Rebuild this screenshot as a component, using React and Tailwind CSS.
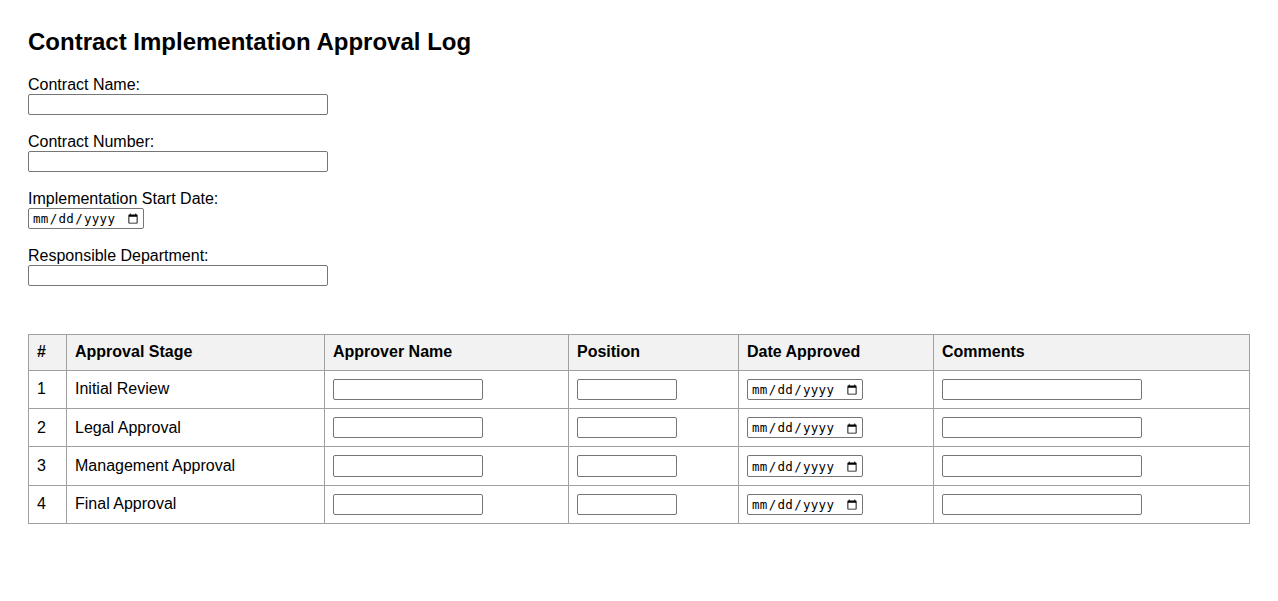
import React from "react";

const rows = ["Initial Review", "Legal Approval", "Management Approval", "Final Approval"];

const textInput =
  "block h-[21.33px] border border-[#767676] rounded-[2px] px-[2px] py-[1px] bg-white text-[13.33px] font-['Liberation_Sans',Arial,sans-serif]";
const dateInput =
  "block h-[21.33px] w-[116px] border border-[#767676] rounded-[2px] pl-[3px] pr-[2px] pt-[2px] pb-0 bg-white text-[12.5px] tracking-[0.3px] font-['DejaVu_Sans_Mono','Liberation_Mono',monospace]";

function Field({ label, type = "text" }) {
  return (
    <div className="mb-[17.3px]">
      <label className="block text-[16px] leading-[18.4px]">{label}</label>
      {type === "date" ? (
        <input type="date" className={dateInput} />
      ) : (
        <input type="text" className={textInput + " w-[300px]"} />
      )}
    </div>
  );
}

export default function App() {
  return (
    <div className="min-h-screen bg-white text-black font-['Liberation_Sans',Arial,sans-serif] px-[28px] pt-[28px] pb-[28px]">
      <h2 className="text-[24px] font-bold leading-[27.6px] mb-[20px]">
        Contract Implementation Approval Log
      </h2>
      <Field label="Contract Name:" />
      <Field label="Contract Number:" />
      <Field label="Implementation Start Date:" type="date" />
      <Field label="Responsible Department:" />

      <table className="w-full border-collapse mt-[48px] text-[16px] table-fixed">
        <colgroup>
          <col className="w-[38px]" />
          <col className="w-[258px]" />
          <col className="w-[244px]" />
          <col className="w-[170px]" />
          <col className="w-[195px]" />
          <col />
        </colgroup>
        <thead>
          <tr className="bg-[#f2f2f2]">
            {["#", "Approval Stage", "Approver Name", "Position", "Date Approved", "Comments"].map((h) => (
              <th
                key={h}
                className="border border-[#a0a0a0] p-[8px] text-left font-bold leading-[18.4px]"
              >
                {h}
              </th>
            ))}
          </tr>
        </thead>
        <tbody>
          {rows.map((r, i) => (
            <tr key={r}>
              <td className="border border-[#a0a0a0] p-[8px] leading-[18.4px]">{i + 1}</td>
              <td className="border border-[#a0a0a0] p-[8px] leading-[18.4px]">{r}</td>
              <td className="border border-[#a0a0a0] p-[8px]">
                <input type="text" className={textInput + " w-[150px]"} />
              </td>
              <td className="border border-[#a0a0a0] p-[8px]">
                <input type="text" className={textInput + " w-[100px]"} />
              </td>
              <td className="border border-[#a0a0a0] p-[8px]">
                <input type="date" className={dateInput} />
              </td>
              <td className="border border-[#a0a0a0] p-[8px]">
                <input type="text" className={textInput + " w-[200px]"} />
              </td>
            </tr>
          ))}
        </tbody>
      </table>
    </div>
  );
}
